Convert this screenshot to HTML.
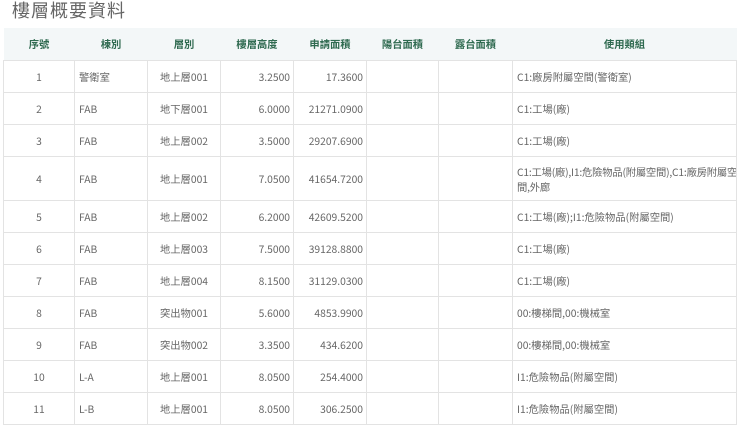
<!DOCTYPE html>
<html><head><meta charset="utf-8"><style>
body{margin:0;background:#fff;font-family:"Noto Sans CJK TC","Liberation Sans",sans-serif;width:740px;height:429px;overflow:hidden;position:relative}
h1{position:absolute;left:12px;top:-2px;margin:0;font-size:18px;font-weight:normal;color:#666;line-height:24px;letter-spacing:1px}
table{position:absolute;left:3px;top:28px;border-collapse:collapse;table-layout:fixed;width:733px;font-size:10.3px;color:#666}
th{background:#f3f7f8;color:#2f6a50;font-weight:bold;height:32px;padding:0;text-align:center;border:none;line-height:14px;vertical-align:middle}
td{border:1px solid #e3e3e3;height:31px;padding:0 4px;white-space:nowrap;line-height:14px;vertical-align:middle;overflow:hidden}
.c{text-align:center}.r{text-align:right;padding-right:3px}
td.w{line-height:15px;letter-spacing:-0.2px}
</style></head><body>
<h1>樓層概要資料</h1>
<table>
<colgroup><col style="width:71px"><col style="width:73px"><col style="width:73px"><col style="width:73px"><col style="width:73px"><col style="width:72px"><col style="width:74px"><col style="width:224px"></colgroup>
<tr><th>序號</th><th>棟別</th><th>層別</th><th>樓層高度</th><th>申請面積</th><th>陽台面積</th><th>露台面積</th><th>使用類組</th></tr>
<tr><td class="c">1</td><td>警衛室</td><td class="c">地上層001</td><td class="r">3.2500</td><td class="r">17.3600</td><td></td><td></td><td>C1:廠房附屬空間(警衛室)</td></tr>
<tr><td class="c">2</td><td>FAB</td><td class="c">地下層001</td><td class="r">6.0000</td><td class="r">21271.0900</td><td></td><td></td><td>C1:工場(廠)</td></tr>
<tr><td class="c">3</td><td>FAB</td><td class="c">地上層002</td><td class="r">3.5000</td><td class="r">29207.6900</td><td></td><td></td><td>C1:工場(廠)</td></tr>
<tr><td class="c" style="height:43px">4</td><td>FAB</td><td class="c">地上層001</td><td class="r">7.0500</td><td class="r">41654.7200</td><td></td><td></td><td class="w">C1:工場(廠),I1:危險物品(附屬空間),C1:廠房附屬空<br>間,外廊</td></tr>
<tr><td class="c">5</td><td>FAB</td><td class="c">地上層002</td><td class="r">6.2000</td><td class="r">42609.5200</td><td></td><td></td><td>C1:工場(廠);I1:危險物品(附屬空間)</td></tr>
<tr><td class="c">6</td><td>FAB</td><td class="c">地上層003</td><td class="r">7.5000</td><td class="r">39128.8800</td><td></td><td></td><td>C1:工場(廠)</td></tr>
<tr><td class="c">7</td><td>FAB</td><td class="c">地上層004</td><td class="r">8.1500</td><td class="r">31129.0300</td><td></td><td></td><td>C1:工場(廠)</td></tr>
<tr><td class="c">8</td><td>FAB</td><td class="c">突出物001</td><td class="r">5.6000</td><td class="r">4853.9900</td><td></td><td></td><td>00:樓梯間,00:機械室</td></tr>
<tr><td class="c">9</td><td>FAB</td><td class="c">突出物002</td><td class="r">3.3500</td><td class="r">434.6200</td><td></td><td></td><td>00:樓梯間,00:機械室</td></tr>
<tr><td class="c">10</td><td>L-A</td><td class="c">地上層001</td><td class="r">8.0500</td><td class="r">254.4000</td><td></td><td></td><td>I1:危險物品(附屬空間)</td></tr>
<tr><td class="c">11</td><td>L-B</td><td class="c">地上層001</td><td class="r">8.0500</td><td class="r">306.2500</td><td></td><td></td><td>I1:危險物品(附屬空間)</td></tr>
</table>
</body></html>
